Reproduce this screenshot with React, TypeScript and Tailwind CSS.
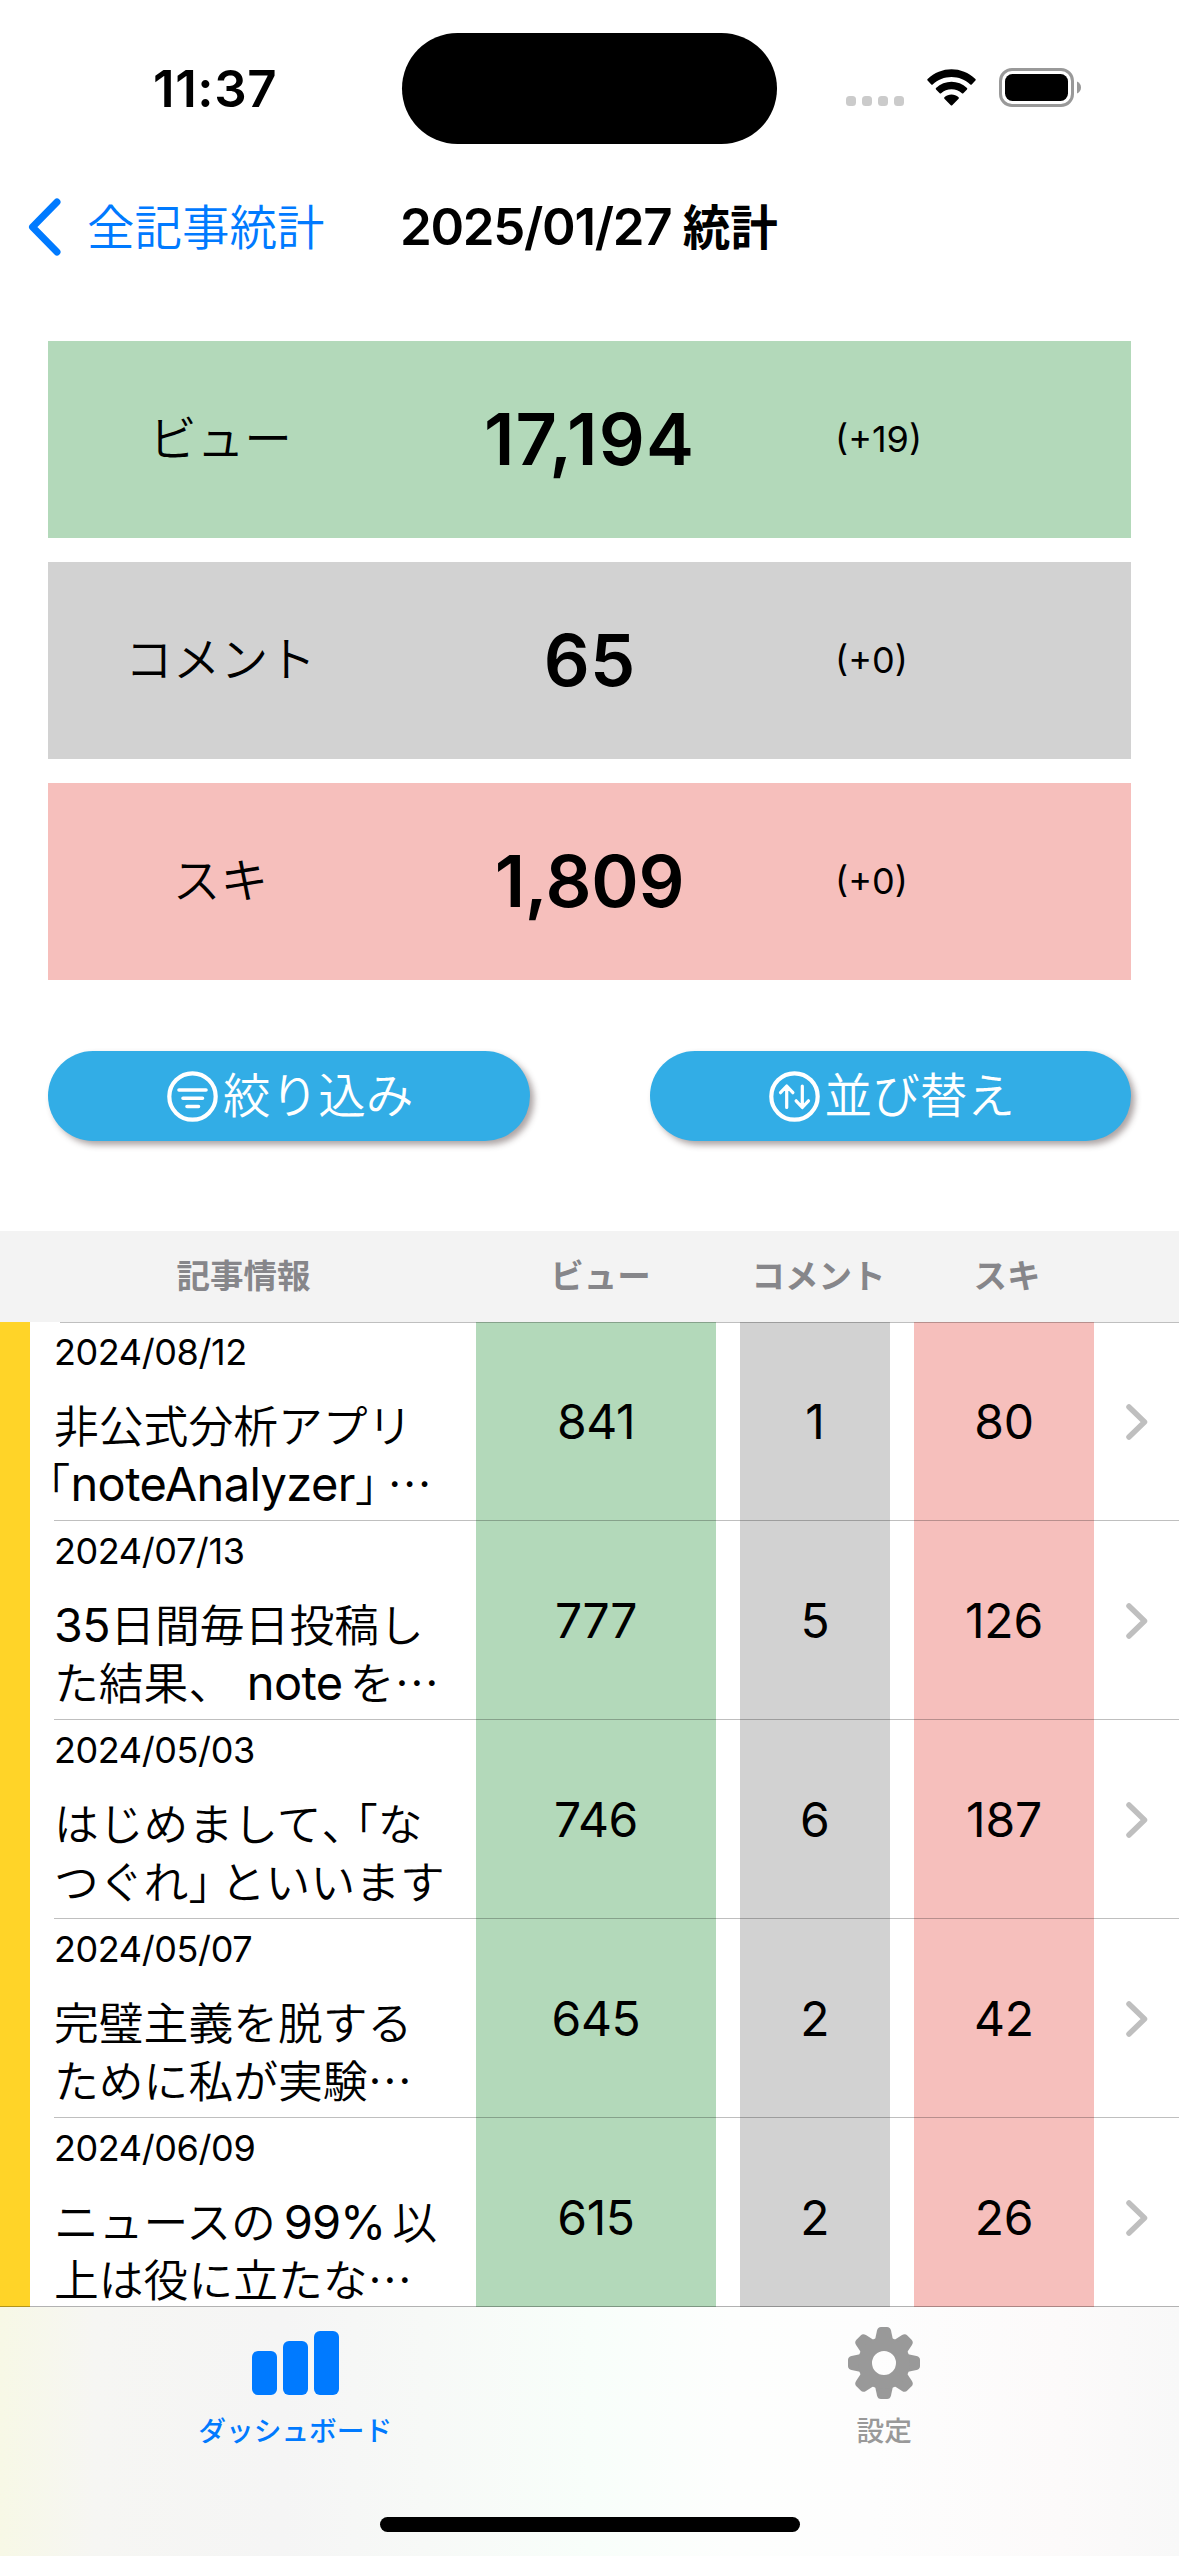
import React from "react";

const articles = [
  { date: "2024/08/12", lines: ["非公式分析アプリ", "「noteAnalyzer」⋯"], views: "841", comments: "1", likes: "80" },
  { date: "2024/07/13", lines: ["35日間毎日投稿し", "た結果、 noteを⋯"], views: "777", comments: "5", likes: "126" },
  { date: "2024/05/03", lines: ["はじめまして、「な", "つぐれ」といいます"], views: "746", comments: "6", likes: "187" },
  { date: "2024/05/07", lines: ["完璧主義を脱する", "ために私が実験⋯"], views: "645", comments: "2", likes: "42" },
  { date: "2024/06/09", lines: ["ニュースの99%以", "上は役に立たな⋯"], views: "615", comments: "2", likes: "26" },
];

const totals = [
  { label: "ビュー", value: "17,194", diff: "(+19)", color: "bg-[#b3d9ba]", tracking: "tracking-[1.2px]" },
  { label: "コメント", value: "65", diff: "(+0)", color: "bg-[#d2d2d2]", tracking: "tracking-normal" },
  { label: "スキ", value: "1,809", diff: "(+0)", color: "bg-[#f6bfbc]", tracking: "tracking-[-0.3px]" },
];

function StatusBar() {
  return (
    <div className="flex h-[177px] shrink-0 items-start">
      <div className="flex h-[177px] w-[402px] items-start pl-[153px] pt-[58px]">
        <span className="text-[51px] font-semibold leading-[62px] tracking-[0.6px]">11:37</span>
      </div>
      <div className="mt-[33px] h-[111px] w-[375px] rounded-full bg-black" />
      <div className="flex flex-1 items-start pl-[69px] pt-[68px]">
        <svg width="58" height="39" viewBox="0 0 58 39" fill="#cbcbcb">
          <rect x="0" y="28" width="10" height="10" rx="3.5" />
          <rect x="16" y="28" width="10" height="10" rx="3.5" />
          <rect x="32" y="28" width="10" height="10" rx="3.5" />
          <rect x="48" y="28" width="10" height="10" rx="3.5" />
        </svg>
        <svg className="ml-[22px]" width="51" height="39" viewBox="0 0 51 39" fill="black">
          <path d="M25.5 8.9c7 0 13.7 2.7 18.800 7.500.4.400 1 .4 1.400 0l3.700-3.800c.4-.4.400-1.100 0-1.500C36-2 15-2 1.600 11.100c-.4.400-.4 1.100 0 1.500l3.700 3.800c.4.400 1 .4 1.400 0 5.100-4.800 11.800-7.500 18.800-7.500z" />
          <path d="M25.500 21.300c3.900 0 7.600 1.400 10.400 4 .4.400 1 .4 1.400 0l3.700-3.800c.4-.4.400-1.100 0-1.500-8.700-8.200-22.200-8.200-31 0-.4.400-.4 1.100 0 1.500l3.700 3.800c.4.400 1 .4 1.400 0 2.800-2.600 6.500-4 10.400-4z" />
          <path d="M32.600 30.700c.4-.4.400-1.100 0-1.500-4.100-3.500-10.100-3.500-14.200 0-.4.400-.4 1.100 0 1.500l6.400 6.500c.4.400 1 .4 1.400 0z" />
        </svg>
        <svg className="ml-[22px]" width="82" height="39" viewBox="0 0 82 39">
          <rect x="1.500" y="1.500" width="72" height="36" rx="11.500" fill="none" stroke="#999" strokeWidth="3" />
          <rect x="6" y="6" width="63" height="27" rx="7.500" fill="black" />
          <path d="M78 13.500c2.600 1.100 4 3.400 4 6s-1.400 4.900-4 6z" fill="#999" />
        </svg>
      </div>
    </div>
  );
}

function NavBar() {
  return (
    <div className="flex h-[100px] shrink-0 items-center">
      <div className="flex w-[400px] items-center pl-[28px] text-[#007aff]">
        <svg width="33" height="58" viewBox="0 0 33 58" fill="none" stroke="#007aff" strokeWidth="7" strokeLinecap="round" strokeLinejoin="round">
          <path d="M29 4 4.500 29 29 54" />
        </svg>
        <span className="ml-[26px] whitespace-nowrap pt-[2px] text-[47.5px] font-[350] leading-[60px]">全記事統計</span>
      </div>
      <h1 className="whitespace-nowrap pt-px text-[51px] font-semibold leading-[60px] tracking-[-1.3px]">
        2025/01/27 <span className="text-[47.5px] tracking-normal">統計</span>
      </h1>
    </div>
  );
}

function TotalCard({ label, value, diff, color, tracking }: (typeof totals)[number]) {
  return (
    <div className={`flex h-[197px] items-center ${color}`}>
      <div className="w-[345px] text-center text-[47.7px] font-[350]">{label}</div>
      <div className={`w-[393px] pb-[2px] text-center text-[72px] font-semibold leading-[88px] ${tracking}`}>{value}</div>
      <div className="pb-[2px] pl-[49px] text-[36px]">{diff}</div>
    </div>
  );
}

function FilterIcon() {
  return (
    <svg width="51" height="51" viewBox="0 0 51 51" fill="none" stroke="white" strokeWidth="4.2" strokeLinecap="round">
      <circle cx="25.5" cy="25.5" r="23.2" />
      <path d="M12 19h27M16 27.200h19.500M20 35.500h11.500" strokeWidth="3.6" />
    </svg>
  );
}

function SortIcon() {
  return (
    <svg width="51" height="51" viewBox="0 0 51 51" fill="none" stroke="white" strokeWidth="4.2" strokeLinecap="round" strokeLinejoin="round">
      <circle cx="25.5" cy="25.5" r="23.2" />
      <path d="M17.700 36.500V15.500M11.500 21.700l6.200-6.700 6.200 6.700M33.300 15v21M27.100 29.800l6.200 6.700 6.200-6.700" strokeWidth="3.200" />
    </svg>
  );
}

function ActionButton({ icon, label }: { icon: React.ReactNode; label: string }) {
  return (
    <button className="flex h-[90px] w-[481.5px] items-center justify-center gap-[5px] rounded-full bg-[#32ade6] pl-[3px] text-white shadow-[4px_4px_6px_rgba(60,40,40,0.42)]">
      {icon}
      <span className="text-[47.6px] font-[350] leading-[60px]">{label}</span>
    </button>
  );
}

function TableHeader() {
  return (
    <div className="flex h-[91px] shrink-0 items-center bg-[#f3f3f3] text-center text-[33.5px] font-semibold text-[#86868a]">
      <div className="w-[487px]">記事情報</div>
      <div className="w-[227px]">ビュー</div>
      <div className="w-[209px]">コメント</div>
      <div className="w-[168px]">スキ</div>
    </div>
  );
}

/* Half-width brackets and per-script sizes keep mixed Japanese and Latin titles evenly set. */
const partClasses: Record<string, string> = {
  "「": "[font-feature-settings:'halt']",
  "」": "mr-[10px] [font-feature-settings:'halt']",
  "note": "ml-[1px] mr-[7px] text-[47px] font-normal leading-[50px] tracking-[-0.6px]",
  "noteAnalyzer": "text-[47px] font-normal leading-[50px] tracking-[-0.6px]",
  "35": "text-[46.5px] font-normal leading-[50px] tracking-[-0.4px]",
  "99%": "ml-[8px] mr-[7px] text-[47px] font-normal leading-[50px] tracking-[-1px]",
};

function TitleLine({ text }: { text: string }) {
  const parts = text.split(/([A-Za-z0-9%]+|、(?=「)|[「」])/).filter(Boolean);
  return (
    <div className={`whitespace-nowrap ${text.startsWith("「") ? "-ml-[6px]" : ""}`}>
      {parts.map((part, i) => (
        <span key={i} className={part === "、" ? "inline-block w-[34px]" : partClasses[part]}>
          {part === "、" ? <span className="[font-feature-settings:'halt']">、</span> : part}
        </span>
      ))}
    </div>
  );
}

function ArticleRow({ article, first }: { article: (typeof articles)[number]; first: boolean }) {
  return (
    <div className="relative flex h-[199px] shrink-0">
      <div className="w-[30px] bg-[#ffd428]" />
      <div className="w-[446px] pl-[24px] pt-[8px]">
        <div className="text-[36px] leading-[44px] tracking-[-0.4px]">{article.date}</div>
        <div className="mt-[24px] text-[44.8px] font-[350] leading-[58px]">
          {article.lines.map((line) => (
            <TitleLine key={line} text={line} />
          ))}
        </div>
      </div>
      <div className="flex w-[240px] items-center justify-center bg-[#b3d9ba] text-[48px] tracking-[-0.4px]">{article.views}</div>
      <div className="ml-[24px] flex w-[150px] items-center justify-center bg-[#d2d2d2] text-[48px]">{article.comments}</div>
      <div className="ml-[24px] flex w-[180px] items-center justify-center bg-[#f6bfbc] text-[48px] tracking-[-0.2px]">{article.likes}</div>
      <div className="flex flex-1 items-center pl-[32px]">
        <svg width="22" height="36" viewBox="0 0 22 36" fill="none" stroke="#bfbfbf" strokeWidth="5.500" strokeLinecap="round" strokeLinejoin="round">
          <path d="M3 3 18.500 18 3 33" />
        </svg>
      </div>
      <div className={`absolute right-0 h-px bg-black/25 ${first ? "left-[60px] top-0" : "left-[54px] -top-px"}`} />
    </div>
  );
}

function TabBar() {
  return (
    <div className="relative -mt-px flex h-[250px] shrink-0 flex-col border-t border-black/30 bg-[linear-gradient(90deg,#f7f8e6_0%,#f6f6f3_8%,#f5f5f5_24%,#f7f9f7_36%,#f8fefa_50%,#fdfefd_62%,#fdfdfd_74%,#fcfafa_90%,#f8f8f8_100%)] bg-clip-padding">
      <div className="flex">
        <div className="flex w-1/2 flex-col items-center pl-[1px] pt-[24px] text-[#007aff]">
          <svg width="87" height="64" viewBox="0 0 87 64" fill="#007aff">
            <rect x="0" y="20" width="25" height="44" rx="6" />
            <rect x="31" y="10" width="25" height="54" rx="6" />
            <rect x="62" y="0" width="25" height="64" rx="6" />
          </svg>
          <span className="mt-[16px] text-[27.7px] font-medium leading-[40px]">ダッシュボード</span>
        </div>
        <div className="flex w-1/2 flex-col items-center pt-[20px] text-[#999]">
          <svg width="72" height="72" viewBox="-36 -36 72 72">
            <defs>
              <path id="tooth" d="M-9-23-7-32.500Q-6.200-36-3-36H3Q6.200-36 7-32.500L9-23Z" />
            </defs>
            <g fill="#999">
              {[0, 45, 90, 135, 180, 225, 270, 315].map((angle) => (
                <use key={angle} href="#tooth" transform={`rotate(${angle})`} />
              ))}
            </g>
            <circle r="19" fill="none" stroke="#999" strokeWidth="14" />
          </svg>
          <span className="mt-[12px] text-[27.7px] font-medium leading-[40px]">設定</span>
        </div>
      </div>
      <div className="mx-auto mb-[24px] mt-auto h-[15px] w-[420px] rounded-full bg-black" />
    </div>
  );
}

export default function App() {
  return (
    <div className="flex h-[2556px] w-[1179px] flex-col overflow-hidden bg-white font-['Inter','Noto_Sans_CJK_JP',sans-serif] text-black">
      <StatusBar />
      <NavBar />
      <div className="mx-[48px] mt-[64px] flex shrink-0 flex-col gap-[24px]">
        {totals.map((total) => (
          <TotalCard key={total.label} {...total} />
        ))}
      </div>
      <div className="mx-[48px] mt-[71px] mb-[90px] flex shrink-0 justify-between">
        <ActionButton icon={<FilterIcon />} label="絞り込み" />
        <ActionButton icon={<SortIcon />} label="並び替え" />
      </div>
      <TableHeader />
      <div className="flex min-h-0 flex-1 flex-col overflow-hidden">
        {articles.map((article, i) => (
          <ArticleRow key={article.date} article={article} first={i === 0} />
        ))}
      </div>
      <TabBar />
    </div>
  );
}
